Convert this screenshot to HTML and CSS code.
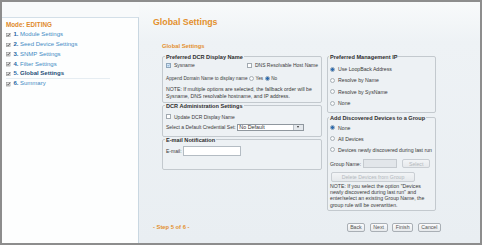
FILE: index.html
```html
<!DOCTYPE html>
<html>
<head>
<meta charset="utf-8">
<link rel="stylesheet" href="styles.css">
</head>
<body>
<div class="frame">
  <aside class="sidebar">
    <div class="mode">Mode: EDITING</div>
    <ul class="steps">
      <li class="step"><svg class="tick" viewBox="0 0 5 5"><rect x="0.5" y="0.5" width="4" height="4" fill="#e6e6e6" stroke="#8a8a8a" stroke-width="0.6"/><path d="M1.2 2.5 L2.2 3.6 L4.6 0.6" fill="none" stroke="#555" stroke-width="0.9"/></svg><b>1.</b> Module Settings</li>
      <li class="step"><svg class="tick" viewBox="0 0 5 5"><rect x="0.5" y="0.5" width="4" height="4" fill="#e6e6e6" stroke="#8a8a8a" stroke-width="0.6"/><path d="M1.2 2.5 L2.2 3.6 L4.6 0.6" fill="none" stroke="#555" stroke-width="0.9"/></svg><b>2.</b> Seed Device Settings</li>
      <li class="step"><svg class="tick" viewBox="0 0 5 5"><rect x="0.5" y="0.5" width="4" height="4" fill="#e6e6e6" stroke="#8a8a8a" stroke-width="0.6"/><path d="M1.2 2.5 L2.2 3.6 L4.6 0.6" fill="none" stroke="#555" stroke-width="0.9"/></svg><b>3.</b> SNMP Settings</li>
      <li class="step"><svg class="tick" viewBox="0 0 5 5"><rect x="0.5" y="0.5" width="4" height="4" fill="#e6e6e6" stroke="#8a8a8a" stroke-width="0.6"/><path d="M1.2 2.5 L2.2 3.6 L4.6 0.6" fill="none" stroke="#555" stroke-width="0.9"/></svg><b>4.</b> Filter Settings</li>
      <li class="step current"><svg class="tick" viewBox="0 0 5 5"><rect x="0.5" y="0.5" width="4" height="4" fill="#e6e6e6" stroke="#8a8a8a" stroke-width="0.6"/><path d="M1.2 2.5 L2.2 3.6 L4.6 0.6" fill="none" stroke="#555" stroke-width="0.9"/></svg><b>5.</b> Global Settings</li>
      <li class="step"><svg class="tick" viewBox="0 0 5 5"><rect x="0.5" y="0.5" width="4" height="4" fill="#e6e6e6" stroke="#8a8a8a" stroke-width="0.6"/><path d="M1.2 2.5 L2.2 3.6 L4.6 0.6" fill="none" stroke="#555" stroke-width="0.9"/></svg><b>6.</b> Summary</li>
    </ul>
  </aside>
  <main class="content">
    <h1 class="title">Global Settings</h1>
    <section class="form">
      <h2 class="subtitle">Global Settings</h2>
      <div class="cols">
        <div class="col col-left">
          <fieldset class="box box-display">
            <legend>Preferred DCR Display Name</legend>
            <div class="row row-checks">
              <span class="opt opt-sysname"><span class="cb checked"><svg viewBox="0 0 6 6"><path d="M1.3 3 L2.5 4.4 L4.9 1.3" fill="none" stroke="#2f6fb0" stroke-width="1"/></svg></span>Sysname</span>
              <span class="opt"><span class="cb"></span>DNS Resolvable Host Name</span>
            </div>
            <div class="row row-append">Append Domain Name to display name <span class="rb"></span>Yes <span class="rb on"></span>No</div>
            <p class="note note-left">NOTE: If multiple options are selected, the fallback order will be<br>Sysname, DNS resolvable hostname, and IP address.</p>
          </fieldset>
          <fieldset class="box box-admin">
            <legend>DCR Administration Settings</legend>
            <div class="row row-update"><span class="cb"></span>Update DCR Display Name</div>
            <div class="row row-select">Select a Default Credential Set: <span class="select"><span class="select-text">No Default</span><span class="select-arrow"></span></span></div>
          </fieldset>
          <fieldset class="box box-email">
            <legend>E-mail Notification</legend>
            <div class="row row-email">E-mail: <span class="input input-email"></span></div>
          </fieldset>
        </div>
        <div class="col col-right">
          <fieldset class="box box-ip">
            <legend>Preferred Management IP</legend>
            <div class="radio-row"><span class="rb on"></span>Use LoopBack Address</div>
            <div class="radio-row"><span class="rb"></span>Resolve by Name</div>
            <div class="radio-row"><span class="rb"></span>Resolve by SysName</div>
            <div class="radio-row"><span class="rb"></span>None</div>
          </fieldset>
          <fieldset class="box box-group">
            <legend>Add Discovered Devices to a Group</legend>
            <div class="radio-row small"><span class="rb on"></span>None</div>
            <div class="radio-row small"><span class="rb"></span>All Devices</div>
            <div class="radio-row small"><span class="rb"></span>Devices newly discovered during last run</div>
            <div class="row row-group">Group Name: <span class="input input-group"></span><span class="btn btn-disabled btn-select">Select</span></div>
            <div class="row row-delete"><span class="btn btn-disabled btn-delete">Delete Devices from Group</span></div>
            <p class="note note-right">NOTE: If you select the option "Devices<br>newly discovered during last run" and<br>enter/select an existing Group Name, the<br>group rule will be overwritten.</p>
          </fieldset>
        </div>
      </div>
    </section>
    <footer class="footer">
      <span class="step-count">- Step 5 of 6 -</span>
      <div class="buttons">
        <span class="btn">Back</span>
        <span class="btn">Next</span>
        <span class="btn">Finish</span>
        <span class="btn">Cancel</span>
      </div>
    </footer>
  </main>
</div>
</body>
</html>
```

FILE: styles.css
```css
* { box-sizing: border-box; }
html, body { margin: 0; padding: 0; }
body {
  width: 482px;
  height: 245px;
  overflow: hidden;
  font-family: "Liberation Sans", Arial, sans-serif;
  color: #3a3a3a;
  background: #fff;
}
.frame {
  width: 482px;
  height: 245px;
  border: 2px solid #8d8d8d;
  display: flex;
  background: #f8fafb;
}
.sidebar {
  width: 137px;
  margin-top: 15px;
  background: #fdfefe;
  border-top: 1px solid #d3dfe8;
  border-right: 1px solid #c9d7e1;
  padding: 2px 0 0 4px;
}
.mode {
  font-size: 6.3px;
  font-weight: bold;
  color: #e08a2a;
  line-height: 9px;
}
.steps {
  list-style: none;
  margin: 1px 0 0;
  padding: 0;
}
.step {
  font-size: 6px;
  line-height: 9.9px;
  height: 9.9px;
  color: #3d8bc4;
  display: flex;
  align-items: center;
  width: 104px;
}
.step b { color: #2466a3; margin-right: 1.5px; }
.step.current { color: #1e4e78; font-weight: bold; border-bottom: 1px solid #e6edf2; }
.tick { width: 4.5px; height: 4.5px; margin-right: 3px; flex: none; }

.content {
  flex: 1;
  display: flex;
  flex-direction: column;
  padding: 15px 0 11.5px 14px;
  background: linear-gradient(to bottom, #f8fafb 0, #eef2f5 40px, #e9eef2 100%);
}
.title {
  margin: 0;
  font-size: 8.8px;
  line-height: 10px;
  font-weight: bold;
  color: #e3902e;
}
.form { padding-left: 9px; margin-top: 16px; }
.subtitle {
  margin: 0;
  font-size: 5.8px;
  line-height: 7px;
  font-weight: bold;
  color: #e3902e;
}
.cols {
  display: flex;
  gap: 5px;
  margin-top: 3.8px;
  align-items: flex-start;
}
.col { display: flex; flex-direction: column; }
.col-left { width: 160px; }
.col-right { width: 109px; }

.box {
  margin: 0;
  border: 1px solid #c3c9ce;
  border-radius: 2px;
  padding: 0 3px;
  min-width: 0;
  font-size: 5px;
  color: #3a3a3a;
  background: #edf1f4;
}
.col-right .box { font-size: 5.2px; }
.box legend {
  font-size: 5.6px;
  line-height: 6px;
  font-weight: bold;
  color: #2e2e2e;
  padding: 0 1px;
  margin-left: -1px;
}
.row {
  display: flex;
  align-items: center;
  white-space: nowrap;
}
.row-checks { height: 9px; margin-top: 1px; }
.opt { display: flex; align-items: center; }
.opt-sysname { width: 83px; }
.row-append { height: 9px; margin-top: 4.5px; font-size: 4.7px; }
.note { margin: 0; line-height: 6.7px; }
.note-left { margin-top: 2.5px; padding-bottom: 2.6px; font-size: 5.2px; }

.cb {
  width: 5px; height: 5px;
  border: 1px solid #a2aab1;
  background: #fff;
  margin-right: 3px;
  flex: none;
  display: inline-flex;
}
.cb.checked { background: #d8e8f6; border-color: #8fa6bb; }
.cb svg { width: 100%; height: 100%; }
.rb {
  display: inline-block;
  width: 5px; height: 5px;
  border-radius: 50%;
  border: 0.7px solid #a8b0b6;
  background: #f7f8f9;
  margin: 0 1.5px 0 1.5px;
  flex: none;
}
.rb.on {
  background: radial-gradient(circle, #2c69ae 0, #2c69ae 1.2px, #a9c6e2 1.7px, #e9f1f8 2.5px);
  border-color: #8aa3ba;
}

.row-update { height: 8px; margin-top: 4px; }
.row-select { height: 8px; margin-top: 2.5px; }
.box-admin { padding-bottom: 4.5px; }
.select {
  display: inline-flex;
  align-items: center;
  width: 67px;
  height: 7px;
  margin-left: 1.5px;
  background: #fff;
  border: 1px solid #8f979e;
  font-size: 5.4px;
  padding-left: 1px;
  color: #333;
}
.select-text { flex: 1; }
.select-arrow {
  width: 10px;
  height: 5px;
  margin-right: 0.5px;
  background: #e4e8ec;
  border-left: 1px solid #b9c0c6;
  position: relative;
}
.select-arrow::after {
  content: "";
  position: absolute;
  left: 3px; top: 1.3px;
  border-left: 1.7px solid transparent;
  border-right: 1.7px solid transparent;
  border-top: 2px solid #333;
}
.row-email { height: 10px; margin-top: 3px; }
.box-email { padding-bottom: 13px; }
.input {
  display: inline-block;
  background: #fff;
  border: 1px solid #b4bcc3;
  height: 10px;
}
.input-email { width: 58px; margin-left: 1px; }

.radio-row {
  display: flex;
  align-items: center;
  height: 11.3px;
  white-space: nowrap;
}
.radio-row .rb { margin: 0 3px 0 0; }
.box-ip { padding: 0 2px 3.7px; }
.box-ip .radio-row:first-of-type { margin-top: 3.7px; }
.box-group { margin-top: 1.6px; padding: 0 2px 2.5px; }
.radio-row.small { height: 11px; }
.box-group .radio-row:first-of-type { margin-top: 1.5px; }
.row-group { height: 12px; margin-top: 2.2px; }
.input-group { width: 34px; margin-left: 2px; background: #e2e6ea; border-color: #c5cacf; height: 9.5px; }
.btn {
  display: inline-flex;
  align-items: center;
  justify-content: center;
  height: 9px;
  padding: 0 2.6px;
  border: 1px solid #a9afb5;
  border-radius: 2px;
  background: linear-gradient(#fbfbfc, #e6e9ec);
  font-size: 5.2px;
  color: #555;
}
.btn-disabled { color: #b3b8bd; border-color: #c9ced3; background: linear-gradient(#f2f4f6, #e6e9ec); }
.btn-select { width: 28px; height: 9.5px; margin-left: 5px; }
.row-delete { margin-top: 2.5px; }
.btn-delete { width: 84px; height: 9.5px; margin-left: 1px; }
.note-right { line-height: 6.3px; margin-top: 1px; }

.footer {
  margin-top: auto;
  display: flex;
  align-items: center;
  height: 9px;
  padding-right: 39px;
}
.step-count {
  font-size: 5.8px;
  font-weight: bold;
  color: #e3902e;
}
.buttons {
  margin-left: auto;
  display: flex;
  gap: 4.5px;
}
```
